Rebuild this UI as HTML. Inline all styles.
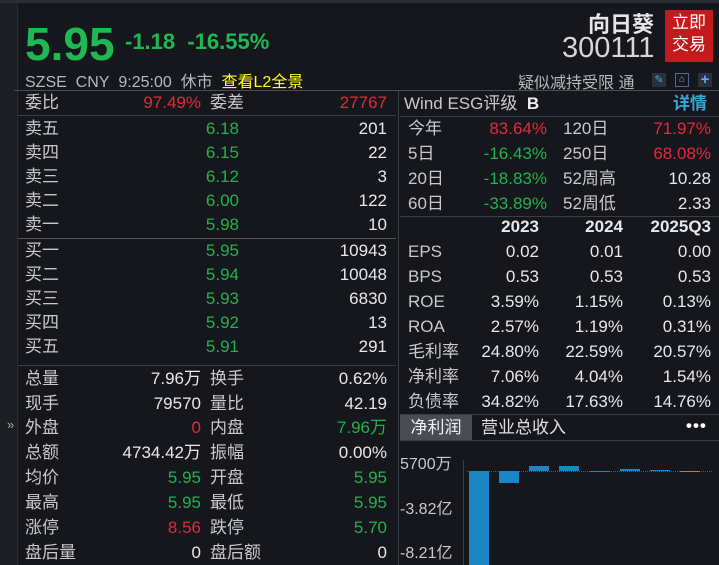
<!DOCTYPE html><html><head><meta charset="utf-8"><style>
body{margin:0;width:719px;height:565px;background:#15171c;overflow:hidden;position:relative;font-family:"Liberation Sans","Noto Sans CJK SC",sans-serif;color:#c9c9c9;font-size:17px}
div,span{position:absolute;white-space:nowrap}
.r{text-align:right}
.g{color:#22b24c}.red{color:#e5283a}.w{color:#e8e8e8}
.l{line-height:24px}
.hl{height:1px;background:#3a3d44}
</style></head><body>
<div style="left:0;top:0;width:17px;height:565px;background:#1d1f24;border-right:1px solid #2a2c31"></div>
<div style="left:7px;top:417px;font-size:13px;color:#aaa">»</div>
<div style="left:0;top:0;width:719px;height:3px;background:#2a2d33"></div>
<div style="left:25px;top:16px;font-size:46px;font-weight:bold;color:#1fb954;line-height:56px">5.95</div>
<div style="left:125px;top:28px;font-size:22px;color:#1fb954;line-height:28px;font-weight:bold">-1.18&nbsp; -16.55%</div>
<div style="left:588px;top:7px;font-size:22px;font-weight:bold;color:#e6e6e6">向日葵</div>
<div style="left:562px;top:32px;font-size:29px;color:#d6d6d6">300111</div>
<div style="left:665px;top:10px;width:48px;height:50px;background:#c21b1d;color:#fff;font-size:17px;line-height:22px;text-align:center;padding-top:2px">立即<br>交易</div>
<div style="left:25px;top:68px;font-size:16px;color:#b8b8b8">SZSE&nbsp; CNY&nbsp; 9:25:00&nbsp; 休市&nbsp; <span style="position:static;color:#ffff1a">查看L2全景</span></div>
<div style="left:518px;top:69px;font-size:16px;color:#b8b8b8">疑似减持受限 通</div>
<div style="left:652px;top:73px;width:14px;height:14px;background:#2c3038;color:#3ab0e0;font-size:11px;text-align:center;line-height:14px">✎</div>
<div style="left:675px;top:73px;width:14px;height:14px;border:1px solid #4a6a90;box-sizing:border-box;color:#7aa8e0;font-size:10px;text-align:center;line-height:12px">⌂</div>
<div style="left:698px;top:73px;width:14px;height:14px;background:#2c3038;color:#6aa0ff;font-size:15px;text-align:center;line-height:14px;font-weight:bold">+</div>
<div class="hl" style="left:14px;top:90px;width:705px;background:#4a4d54"></div>
<div style="left:398px;top:91px;width:1px;height:474px;background:#3a3d44"></div>

<div class="l" style="left:25px;top:91px">委比</div><div class="l r red" style="left:100px;width:101px;top:91px">97.49%</div><div class="l" style="left:210px;top:91px">委差</div><div class="l r red" style="left:300px;width:87px;top:91px">27767</div>
<div class="hl" style="left:18px;top:115px;width:378px"></div>
<div class="l" style="left:25px;top:117px">卖五</div><div class="l r g" style="left:150px;width:89px;top:117px">6.18</div><div class="l r w" style="left:300px;width:87px;top:117px">201</div>
<div class="l" style="left:25px;top:141px">卖四</div><div class="l r g" style="left:150px;width:89px;top:141px">6.15</div><div class="l r w" style="left:300px;width:87px;top:141px">22</div>
<div class="l" style="left:25px;top:165px">卖三</div><div class="l r g" style="left:150px;width:89px;top:165px">6.12</div><div class="l r w" style="left:300px;width:87px;top:165px">3</div>
<div class="l" style="left:25px;top:189px">卖二</div><div class="l r g" style="left:150px;width:89px;top:189px">6.00</div><div class="l r w" style="left:300px;width:87px;top:189px">122</div>
<div class="l" style="left:25px;top:213px">卖一</div><div class="l r g" style="left:150px;width:89px;top:213px">5.98</div><div class="l r w" style="left:300px;width:87px;top:213px">10</div>
<div class="hl" style="left:18px;top:238px;width:378px;background:#555"></div>
<div class="l" style="left:25px;top:239px">买一</div><div class="l r g" style="left:150px;width:89px;top:239px">5.95</div><div class="l r w" style="left:300px;width:87px;top:239px">10943</div>
<div class="l" style="left:25px;top:263px">买二</div><div class="l r g" style="left:150px;width:89px;top:263px">5.94</div><div class="l r w" style="left:300px;width:87px;top:263px">10048</div>
<div class="l" style="left:25px;top:287px">买三</div><div class="l r g" style="left:150px;width:89px;top:287px">5.93</div><div class="l r w" style="left:300px;width:87px;top:287px">6830</div>
<div class="l" style="left:25px;top:311px">买四</div><div class="l r g" style="left:150px;width:89px;top:311px">5.92</div><div class="l r w" style="left:300px;width:87px;top:311px">13</div>
<div class="l" style="left:25px;top:335px">买五</div><div class="l r g" style="left:150px;width:89px;top:335px">5.91</div><div class="l r w" style="left:300px;width:87px;top:335px">291</div>
<div class="hl" style="left:18px;top:365px;width:378px"></div>
<div class="l" style="left:25px;top:367px">总量</div><div class="l r w" style="left:80px;width:121px;top:367px">7.96万</div><div class="l" style="left:210px;top:367px">换手</div><div class="l r w" style="left:300px;width:87px;top:367px">0.62%</div>
<div class="l" style="left:25px;top:392px">现手</div><div class="l r w" style="left:80px;width:121px;top:392px">79570</div><div class="l" style="left:210px;top:392px">量比</div><div class="l r w" style="left:300px;width:87px;top:392px">42.19</div>
<div class="l" style="left:25px;top:416px">外盘</div><div class="l r red" style="left:80px;width:121px;top:416px">0</div><div class="l" style="left:210px;top:416px">内盘</div><div class="l r g" style="left:300px;width:87px;top:416px">7.96万</div>
<div class="l" style="left:25px;top:441px">总额</div><div class="l r w" style="left:80px;width:121px;top:441px">4734.42万</div><div class="l" style="left:210px;top:441px">振幅</div><div class="l r w" style="left:300px;width:87px;top:441px">0.00%</div>
<div class="l" style="left:25px;top:466px">均价</div><div class="l r g" style="left:80px;width:121px;top:466px">5.95</div><div class="l" style="left:210px;top:466px">开盘</div><div class="l r g" style="left:300px;width:87px;top:466px">5.95</div>
<div class="l" style="left:25px;top:491px">最高</div><div class="l r g" style="left:80px;width:121px;top:491px">5.95</div><div class="l" style="left:210px;top:491px">最低</div><div class="l r g" style="left:300px;width:87px;top:491px">5.95</div>
<div class="l" style="left:25px;top:516px">涨停</div><div class="l r red" style="left:80px;width:121px;top:516px">8.56</div><div class="l" style="left:210px;top:516px">跌停</div><div class="l r g" style="left:300px;width:87px;top:516px">5.70</div>
<div class="l" style="left:25px;top:541px">盘后量</div><div class="l r w" style="left:80px;width:121px;top:541px">0</div><div class="l" style="left:210px;top:541px">盘后额</div><div class="l r w" style="left:300px;width:87px;top:541px">0</div>

<div class="l" style="left:404px;top:92px">Wind ESG评级 <b style="position:static;color:#eee">&nbsp;B</b></div>
<div class="l" style="left:673px;top:92px;color:#3aa6d6;font-weight:bold">详情</div>
<div class="hl" style="left:400px;top:116px;width:319px"></div>
<div class="l" style="left:408px;top:117px">今年</div><div class="l r red" style="left:470px;width:77px;top:117px">83.64%</div><div class="l" style="left:563px;top:117px">120日</div><div class="l r red" style="left:630px;width:81px;top:117px">71.97%</div>
<div class="l" style="left:408px;top:142px">5日</div><div class="l r g" style="left:470px;width:77px;top:142px">-16.43%</div><div class="l" style="left:563px;top:142px">250日</div><div class="l r red" style="left:630px;width:81px;top:142px">68.08%</div>
<div class="l" style="left:408px;top:167px">20日</div><div class="l r g" style="left:470px;width:77px;top:167px">-18.83%</div><div class="l" style="left:563px;top:167px">52周高</div><div class="l r w" style="left:630px;width:81px;top:167px">10.28</div>
<div class="l" style="left:408px;top:192px">60日</div><div class="l r g" style="left:470px;width:77px;top:192px">-33.89%</div><div class="l" style="left:563px;top:192px">52周低</div><div class="l r w" style="left:630px;width:81px;top:192px">2.33</div>
<div class="hl" style="left:400px;top:216px;width:319px"></div>
<div class="l r w" style="left:470px;width:69px;top:215px;font-weight:bold">2023</div><div class="l r w" style="left:550px;width:73px;top:215px;font-weight:bold">2024</div><div class="l r w" style="left:630px;width:81px;top:215px;font-weight:bold">2025Q3</div>
<div class="l" style="left:408px;top:240px">EPS</div><div class="l r w" style="left:470px;width:69px;top:240px">0.02</div><div class="l r w" style="left:550px;width:73px;top:240px">0.01</div><div class="l r w" style="left:630px;width:81px;top:240px">0.00</div>
<div class="l" style="left:408px;top:265px">BPS</div><div class="l r w" style="left:470px;width:69px;top:265px">0.53</div><div class="l r w" style="left:550px;width:73px;top:265px">0.53</div><div class="l r w" style="left:630px;width:81px;top:265px">0.53</div>
<div class="l" style="left:408px;top:290px">ROE</div><div class="l r w" style="left:470px;width:69px;top:290px">3.59%</div><div class="l r w" style="left:550px;width:73px;top:290px">1.15%</div><div class="l r w" style="left:630px;width:81px;top:290px">0.13%</div>
<div class="l" style="left:408px;top:315px">ROA</div><div class="l r w" style="left:470px;width:69px;top:315px">2.57%</div><div class="l r w" style="left:550px;width:73px;top:315px">1.19%</div><div class="l r w" style="left:630px;width:81px;top:315px">0.31%</div>
<div class="l" style="left:408px;top:340px">毛利率</div><div class="l r w" style="left:470px;width:69px;top:340px">24.80%</div><div class="l r w" style="left:550px;width:73px;top:340px">22.59%</div><div class="l r w" style="left:630px;width:81px;top:340px">20.57%</div>
<div class="l" style="left:408px;top:365px">净利率</div><div class="l r w" style="left:470px;width:69px;top:365px">7.06%</div><div class="l r w" style="left:550px;width:73px;top:365px">4.04%</div><div class="l r w" style="left:630px;width:81px;top:365px">1.54%</div>
<div class="l" style="left:408px;top:390px">负债率</div><div class="l r w" style="left:470px;width:69px;top:390px">34.82%</div><div class="l r w" style="left:550px;width:73px;top:390px">17.63%</div><div class="l r w" style="left:630px;width:81px;top:390px">14.76%</div>
<div class="hl" style="left:400px;top:414px;width:319px"></div>
<div style="left:400px;top:415px;width:72px;height:25px;background:#4a4c55;color:#f0f0f0;line-height:25px;text-align:center">净利润</div>
<div style="left:481px;top:415px;line-height:25px;color:#e0e0e0">营业总收入</div>
<div style="left:686px;top:413px;line-height:25px;color:#fff;font-weight:bold;letter-spacing:1px">•••</div>
<div class="hl" style="left:400px;top:440px;width:319px"></div>
<div style="left:400px;top:454px;line-height:22px;font-size:16px">5700万</div>
<div style="left:400px;top:499px;line-height:22px;font-size:16px">-3.82亿</div>
<div style="left:400px;top:543px;line-height:22px;font-size:16px">-8.21亿</div>
<div style="left:463px;top:460px;width:1px;height:105px;background:#3a3d44"></div>
<div style="left:467px;top:471px;width:245px;border-top:1px dotted #555"></div>
<div style="left:469px;top:471px;width:20px;height:94px;background:#1b86c4"></div>
<div style="left:499px;top:471px;width:20px;height:12px;background:#1b86c4"></div>
<div style="left:529px;top:466px;width:20px;height:5px;background:#1b86c4"></div>
<div style="left:559px;top:466px;width:20px;height:5px;background:#1b86c4"></div>
<div style="left:590px;top:471px;width:20px;height:1px;background:#1b86c4"></div>
<div style="left:620px;top:469px;width:20px;height:2px;background:#1b86c4"></div>
<div style="left:650px;top:470px;width:20px;height:1px;background:#1b86c4"></div>
<div style="left:680px;top:471px;width:20px;height:1px;background:#c87a2a"></div>
</body></html>
